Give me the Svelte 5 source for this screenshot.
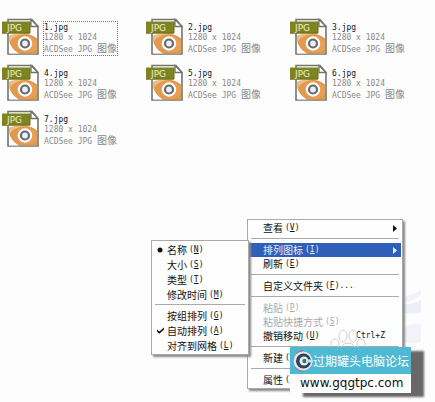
<script>
  const files = [1, 2, 3, 4, 5, 6, 7].map((n) => `${n}.jpg`);
  let selected = $state(0);

  const arrange = [
    { label: '名称', key: 'N', mark: 'dot' },
    { label: '大小', key: 'S' },
    { label: '类型', key: 'T' },
    { label: '修改时间', key: 'M' },
    null,
    { label: '按组排列', key: 'G' },
    { label: '自动排列', key: 'A', mark: 'check' },
    { label: '对齐到网格', key: 'L' }
  ];

  const main = [
    { label: '查看', key: 'V', arrow: true },
    null,
    { label: '排列图标', key: 'I', arrow: true, active: true },
    { label: '刷新', key: 'E' },
    null,
    { label: '自定义文件夹', key: 'F', tail: '...' },
    null,
    { label: '粘贴', key: 'P', disabled: true },
    { label: '粘贴快捷方式', key: 'S', disabled: true },
    { label: '撤销移动', key: 'U', shortcut: 'Ctrl+Z' },
    null,
    { label: '新建', key: 'W', arrow: true },
    null,
    { label: '属性', key: 'R' }
  ];
</script>

{#snippet entry(item)}
  {#if item}
    <button class="item" class:active={item.active} disabled={item.disabled} role="menuitem">
      <span class="mark">
        {#if item.mark === 'dot'}
          <svg width="6" height="6" viewBox="0 0 6 6"><circle cx="3" cy="3" r="2.5" /></svg>
        {:else if item.mark === 'check'}
          <svg width="7" height="7" viewBox="0 0 7 7"><path d="M0 2.4 2.4 4.4 7 .4V2.6L2.4 6.8 0 4.8Z" /></svg>
        {/if}
      </span>
      <span class="label">{item.label}</span>
      <span class="latin key">(<u>{item.key}</u>){item.tail ?? ''}</span>
      {#if item.shortcut}<span class="latin shortcut">{item.shortcut}</span>{/if}
      {#if item.arrow}
        <svg class="arrow" width="4" height="7" viewBox="0 0 4 7"><path d="M0 0 4 3.5 0 7Z" /></svg>
      {/if}
    </button>
  {:else}
    <hr />
  {/if}
{/snippet}

<main>
  <svg class="wallpaper" width="24" height="66" viewBox="0 0 24 66" aria-hidden="true">
    <path d="M0 12Q12 10 20 5V10Q12 16 0 18Z" fill="#f1f3fa" />
    <path d="M0 19Q12 20 20 15V27Q12 30 0 27Z" fill="#eceff7" />
    <path d="M0 44Q12 37 20 39V57Q12 60 0 57Z" fill="#f2f3fa" />
  </svg>

  <section class="files">
    {#each files as name, i}
      <button class="file" onclick={() => (selected = i)}>
        <svg class="icon" width="37" height="38" viewBox="0 0 37 37" aria-hidden="true">
          <path d="M6 1H30L36 8V35.500H6Z" fill="#fff" stroke="#73736f" stroke-width="1.600" />
          <path d="M7 18Q13 15 20 15Q29 15 35 20V35H16Q8 29 7 22Z" fill="#e09a50" />
          <path d="M7 23Q9 31 17 35H7Z" fill="#fff" />
          <path d="M7 17Q15 14 24 15.500Q12 16 7 24Z" fill="#efbd85" />
          <path d="M14 25Q18 17 24 17Q30 17 35 23V30Q31 34 24 34Q17 33 14 25Z" fill="#e89f55" />
          <circle cx="23" cy="25" r="7.200" fill="#fff" />
          <circle cx="23" cy="25" r="4" fill="#f2eeee" stroke="#5f6a76" stroke-width="2.200" />
          <path d="M29 1V8H36Z" fill="#fff" stroke="#73736f" stroke-width="1.300" />
          <rect x="0" y="3" width="28" height="12" fill="#7e8424" />
          <path d="M0 14.500H28V3" fill="none" stroke="#686e19" />
          <text x="5" y="12">JPG</text>
        </svg>
        <span class="info" class:selected={selected === i}>
          <span class="name">{name}</span>
          <span>1280 x 1024</span>
          <span>ACDSee JPG <span class="cjk">图像</span></span>
        </span>
      </button>
    {/each}
  </section>

  <div class="menu context" role="menu">
    {#each main as item}{@render entry(item)}{/each}
    <svg class="paw" width="36" height="24" viewBox="0 0 36 24" aria-hidden="true">
      <g fill="none" stroke="#cfcfcf">
        <ellipse cx="5" cy="15" rx="4" ry="5" />
        <ellipse cx="13" cy="7" rx="4" ry="6" />
        <ellipse cx="23" cy="7" rx="4" ry="6" />
        <ellipse cx="31" cy="15" rx="4" ry="5" />
        <path d="M9 24Q11 14 18 14T27 24" />
      </g>
    </svg>
  </div>

  <div class="menu arrange" role="menu">
    {#each arrange as item}{@render entry(item)}{/each}
  </div>

  <a class="banner" href="http://www.gqgtpc.com">
    <span class="title">
      <svg width="23" height="26" viewBox="0 0 23 26" aria-hidden="true">
        <path d="M14 2A11 11 0 1 0 15 24A12 12 0 0 1 14 2Z" fill="#b95f76" />
        <circle cx="13" cy="13" r="9.500" fill="#e9e5ec" />
        <circle cx="13.500" cy="13" r="7.500" fill="#2c4555" />
        <circle cx="14" cy="13" r="4.500" fill="#e4f0f4" />
        <circle cx="14.500" cy="13" r="2.200" fill="#48687a" />
        <path d="M16 11.500H23V14.500H16Z" fill="#b9e4ee" />
      </svg>
      <span>过期罐头电脑论坛</span>
    </span>
    <span class="url">www.gqgtpc.com</span>
  </a>
</main>

<style>
  :global(body) {
    background: #fdfdfd;
  }

  main {
    position: relative;
    min-height: 100vh;
    box-sizing: border-box;
    padding: 18px 0 0 2px;
    overflow: hidden;
    font: 10px/10px 'Noto Sans CJK SC', sans-serif;
    color: #111;
  }

  button {
    border: 0;
    padding: 0;
    background: none;
    font: inherit;
    color: inherit;
    text-align: left;
  }

  .files {
    display: grid;
    grid-template-columns: repeat(auto-fill, 144px);
    row-gap: 8px;
  }

  .file {
    display: flex;
    align-items: flex-start;
    gap: 4px;
    height: 38px;
  }

  .icon text {
    font: 9px 'DejaVu Sans', sans-serif;
    fill: #eef0c8;
  }

  .info {
    display: flex;
    flex-direction: column;
    margin-top: 3px;
    border: 1px dotted transparent;
    font: 8px/10px 'DejaVu Sans Mono', monospace;
    color: #888;
    white-space: nowrap;
  }

  .info.selected {
    border-color: #777;
  }

  .name {
    line-height: 11px;
    color: #111;
  }

  .cjk {
    font: 10px/10px 'Noto Sans CJK SC', sans-serif;
  }

  .latin {
    font: 8px/10px 'DejaVu Sans Mono', monospace;
  }

  .menu {
    position: absolute;
    box-sizing: border-box;
    border: 1px solid #aaa;
    background: #fefefe;
    box-shadow: 2px 2px 2px #888;
  }

  .context {
    left: 247px;
    top: 219px;
    width: 156px;
    padding: 1px;
  }

  .arrange {
    left: 151px;
    top: 240px;
    width: 98px;
    padding: 1px;
  }

  .item {
    display: flex;
    align-items: center;
    width: 100%;
    height: 14px;
    padding-right: 4px;
    white-space: nowrap;
  }

  .arrange .item {
    height: 15px;
  }

  .item.active {
    background: #2f5fb8;
    color: #e6eefc;
  }

  .item:disabled {
    color: #aaa;
  }

  .mark {
    display: flex;
    justify-content: center;
    width: 14px;
  }

  .key {
    margin-left: 2px;
  }

  .shortcut {
    margin-left: auto;
    margin-right: 12px;
  }

  .arrow {
    margin-left: auto;
  }

  .item svg {
    fill: currentColor;
  }

  hr {
    height: 1px;
    margin: 3px 2px 4px;
    border: 0;
    background: #aaa;
  }

  .arrange hr {
    margin: 2px 2px 3px;
  }

  .paw {
    position: absolute;
    left: 82px;
    top: 109px;
  }

  .wallpaper {
    position: absolute;
    left: 401px;
    top: 285px;
  }

  .banner {
    position: absolute;
    left: 290px;
    top: 347px;
    width: 121px;
    background: #fdfdfd;
    box-shadow: 13px 4px 2px #686868;
    color: #111;
    text-decoration: none;
  }

  .title {
    display: flex;
    align-items: center;
    height: 27px;
    background: #4db9d2;
    color: #fff;
    font-size: 12px;
    line-height: 16px;
    white-space: nowrap;
  }

  .url {
    display: block;
    margin-left: 10px;
    font: 12px/19px 'DejaVu Sans', sans-serif;
  }
</style>
